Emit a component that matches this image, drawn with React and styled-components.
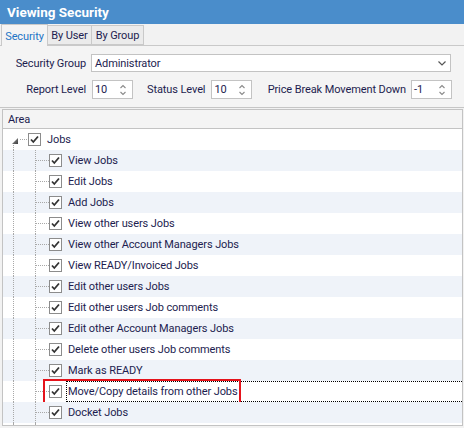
import React from "react";
import styled, { createGlobalStyle } from "styled-components";

const GlobalStyle = createGlobalStyle`
  html, body {
    margin: 0;
    padding: 0;
    background: #f0f0f0;
  }
  body {
    font-family: Roboto, "Liberation Sans", sans-serif;
    font-size: 11px;
    letter-spacing: -0.1px;
    color: #1d1d4f;
  }
`;

const permissions = [
  "View Jobs",
  "Edit Jobs",
  "Add Jobs",
  "View other users Jobs",
  "View other Account Managers Jobs",
  "View READY/Invoiced Jobs",
  "Edit other users Jobs",
  "Edit other users Job comments",
  "Edit other Account Managers Jobs",
  "Delete other users Job comments",
  "Mark as READY",
  "Move/Copy details from other Jobs",
  "Docket Jobs",
];

const SELECTED = "Move/Copy details from other Jobs";

const App = () => {
  return (
    <Window>
      <GlobalStyle />
      <TitleBar>Viewing Security</TitleBar>

      <TabStrip>
        <Tab active width={47}>Security</Tab>
        <Tab width={45}>By User</Tab>
        <Tab width={53}>By Group</Tab>
      </TabStrip>

      <FormPanel>
        <FormRow>
          <FieldLabel width={86}>Security Group</FieldLabel>
          <Select>
            <span>Administrator</span>
            <Chevron />
          </Select>
        </FormRow>
        <FormRow>
          <FieldLabel width={86}>Report Level</FieldLabel>
          <Spinner value="10" />
          <FieldLabel gap={14}>Status Level</FieldLabel>
          <Spinner value="10" />
          <FieldLabel grow>Price Break Movement Down</FieldLabel>
          <Spinner value="-1" />
        </FormRow>
      </FormPanel>

      <Grid>
        <GridHeader>Area</GridHeader>
        <GridBody>
          <TreeRow>
            <ExpanderGlyph />
            <CheckBox />
            <ItemLabel>Jobs</ItemLabel>
          </TreeRow>
          {permissions.map((item, i) => (
            <TreeRow key={item} alt={i % 2 === 0}>
              <Guide width={10} />
              <Guide width={21} />
              <Branch />
              <CheckBox />
              <ItemLabel focused={item === SELECTED}>{item}</ItemLabel>
              {item === SELECTED && <Annotation />}
            </TreeRow>
          ))}
          <FillerRow>
            <Guide width={10} />
            <Guide width={21} />
          </FillerRow>
        </GridBody>
      </Grid>
    </Window>
  );
};

const Chevron = () => (
  <ChevronIcon viewBox="0 0 8 5" width="8" height="5">
    <path d="M0.5 0.5 L4 4 L7.5 0.5" fill="none" stroke="#555" strokeWidth="1.2" />
  </ChevronIcon>
);

const Spinner = ({ value }) => (
  <SpinBox>
    <SpinValue>{value}</SpinValue>
    <SpinArrows viewBox="0 0 8 14" width="8" height="14">
      <path d="M1.5 5 L4 2.5 L6.5 5" fill="none" stroke="#8a8a8a" strokeWidth="1.1" />
      <path d="M1.5 9 L4 11.5 L6.5 9" fill="none" stroke="#8a8a8a" strokeWidth="1.1" />
    </SpinArrows>
  </SpinBox>
);

const CheckBox = () => (
  <Box>
    <svg viewBox="0 0 11 11" width="11" height="11">
      <path d="M2 5.5 L4.3 8 L9 2.5" fill="none" stroke="#333333" strokeWidth="1.8" />
    </svg>
  </Box>
);

const ExpanderGlyph = () => (
  <svg width="25" height="21" viewBox="0 0 25 21">
    <defs>
      <linearGradient id="tri" x1="0" y1="0" x2="1" y2="1">
        <stop offset="0" stopColor="#a0a0a0" />
        <stop offset="1" stopColor="#3c3c3c" />
      </linearGradient>
    </defs>
    <path d="M15 9 L15 15 L9 15 Z" fill="url(#tri)" />
    <line x1="17" y1="10.5" x2="25" y2="10.5" stroke="#a8a8a8" strokeDasharray="1 1" />
    <line x1="10.5" y1="16" x2="10.5" y2="21" stroke="#a8a8a8" strokeDasharray="1 1" />
  </svg>
);

const Window = styled.div`
  width: 464px;
  height: 428px;
  display: flex;
  flex-direction: column;
  box-sizing: border-box;
  background: #f2f2f2;
  overflow: hidden;
`;

const TitleBar = styled.div`
  height: 24px;
  flex: none;
  display: flex;
  align-items: center;
  padding-left: 7px;
  background: #4a8dcb;
  color: #ffffff;
  font-size: 13.5px;
  font-weight: 700;
  letter-spacing: 0;
`;

const TabStrip = styled.div`
  height: 22px;
  flex: none;
  display: flex;
  align-items: flex-end;
  padding-left: 1px;
  border-bottom: 1px solid #c9c9c9;
  box-sizing: border-box;
`;

const Tab = styled.div`
  box-sizing: border-box;
  width: ${(p) => p.width}px;
  height: ${(p) => (p.active ? "22px" : "20px")};
  margin-bottom: ${(p) => (p.active ? "-1px" : "0")};
  margin-left: ${(p) => (p.active ? "0" : "-1px")};
  display: flex;
  align-items: center;
  justify-content: center;
  border: 1px solid #c9c9c9;
  border-bottom: ${(p) => (p.active ? "none" : "1px solid #c9c9c9")};
  background: ${(p) => (p.active ? "#f4f4f4" : "#ebebeb")};
  color: ${(p) => (p.active ? "#1f74c6" : "#1d1d4f")};
  padding-top: ${(p) => (p.active ? "1px" : "0")};
`;

const FormPanel = styled.div`
  height: 62px;
  flex: none;
  box-sizing: border-box;
  display: flex;
  flex-direction: column;
  gap: 8px;
  padding-top: 8px;
  background: #f4f4f4;
  border-bottom: 1px solid #c6c6c6;
`;

const FormRow = styled.div`
  display: flex;
  align-items: center;
  height: 18px;
  padding-right: 12px;
`;

const FieldLabel = styled.div`
  width: ${(p) => (p.width ? `${p.width}px` : "auto")};
  flex: ${(p) => (p.grow ? 1 : "none")};
  text-align: right;
  margin-left: ${(p) => (p.gap ? `${p.gap}px` : "0")};
  margin-right: ${(p) => (p.grow ? "5px" : "6px")};
  white-space: nowrap;
`;

const Select = styled.div`
  flex: 1;
  height: 18px;
  box-sizing: border-box;
  margin-left: -1px;
  margin-right: 1px;
  border: 1px solid #c3c3c3;
  background: #ffffff;
  display: flex;
  align-items: center;
  justify-content: space-between;
  padding: 0 4px 0 3px;
`;

const ChevronIcon = styled.svg`
  display: block;
  margin-top: 1px;
`;

const SpinBox = styled.div`
  width: 41px;
  height: 19px;
  flex: none;
  box-sizing: border-box;
  border: 1px solid #c3c3c3;
  background: #ffffff;
  display: flex;
  align-items: center;
  justify-content: space-between;
  padding: 0 5px 0 2px;
  margin-top: 1px;
`;

const SpinValue = styled.span`
  display: block;
`;

const SpinArrows = styled.svg`
  display: block;
`;

const Grid = styled.div`
  flex: 1;
  margin: 1px 1px 2px 2px;
  border: 1px solid #c3c3c3;
  background: #ffffff;
  display: flex;
  flex-direction: column;
  overflow: hidden;
`;

const GridHeader = styled.div`
  height: 18px;
  flex: none;
  display: flex;
  align-items: center;
  padding-left: 5px;
  background: #f4f4f4;
  border-bottom: 1px solid #c3c3c3;
`;

const GridBody = styled.div`
  flex: 1;
  display: flex;
  flex-direction: column;
`;

const TreeRow = styled.div`
  position: relative;
  height: 21px;
  flex: none;
  display: flex;
  align-items: center;
  background: ${(p) => (p.alt ? "#eff3f9" : "#ffffff")};
`;

const FillerRow = styled.div`
  flex: 1;
  display: flex;
`;

const Guide = styled.div`
  width: ${(p) => p.width}px;
  height: 100%;
  flex: none;
  border-right: 1px dotted #a8a8a8;
`;

const Branch = styled.div`
  width: 13px;
  height: 11px;
  flex: none;
  align-self: flex-start;
  border-bottom: 1px dotted #a8a8a8;
  box-sizing: border-box;
`;

const Box = styled.div`
  width: 13px;
  height: 13px;
  flex: none;
  box-sizing: border-box;
  border: 1px solid #8c8c8c;
  background: #ffffff;
  display: flex;
  align-items: center;
  justify-content: center;
`;

const ItemLabel = styled.div`
  flex: 1;
  align-self: stretch;
  display: flex;
  align-items: center;
  margin-left: 4px;
  padding-left: 1px;
  border: 1px dotted ${(p) => (p.focused ? "#000000" : "transparent")};
  border-right: none;
  white-space: nowrap;
`;

const Annotation = styled.div`
  position: absolute;
  left: 40px;
  top: -2px;
  width: 198px;
  height: 25px;
  box-sizing: border-box;
  border: 2px solid #e5131b;
  pointer-events: none;
`;

export default App;
